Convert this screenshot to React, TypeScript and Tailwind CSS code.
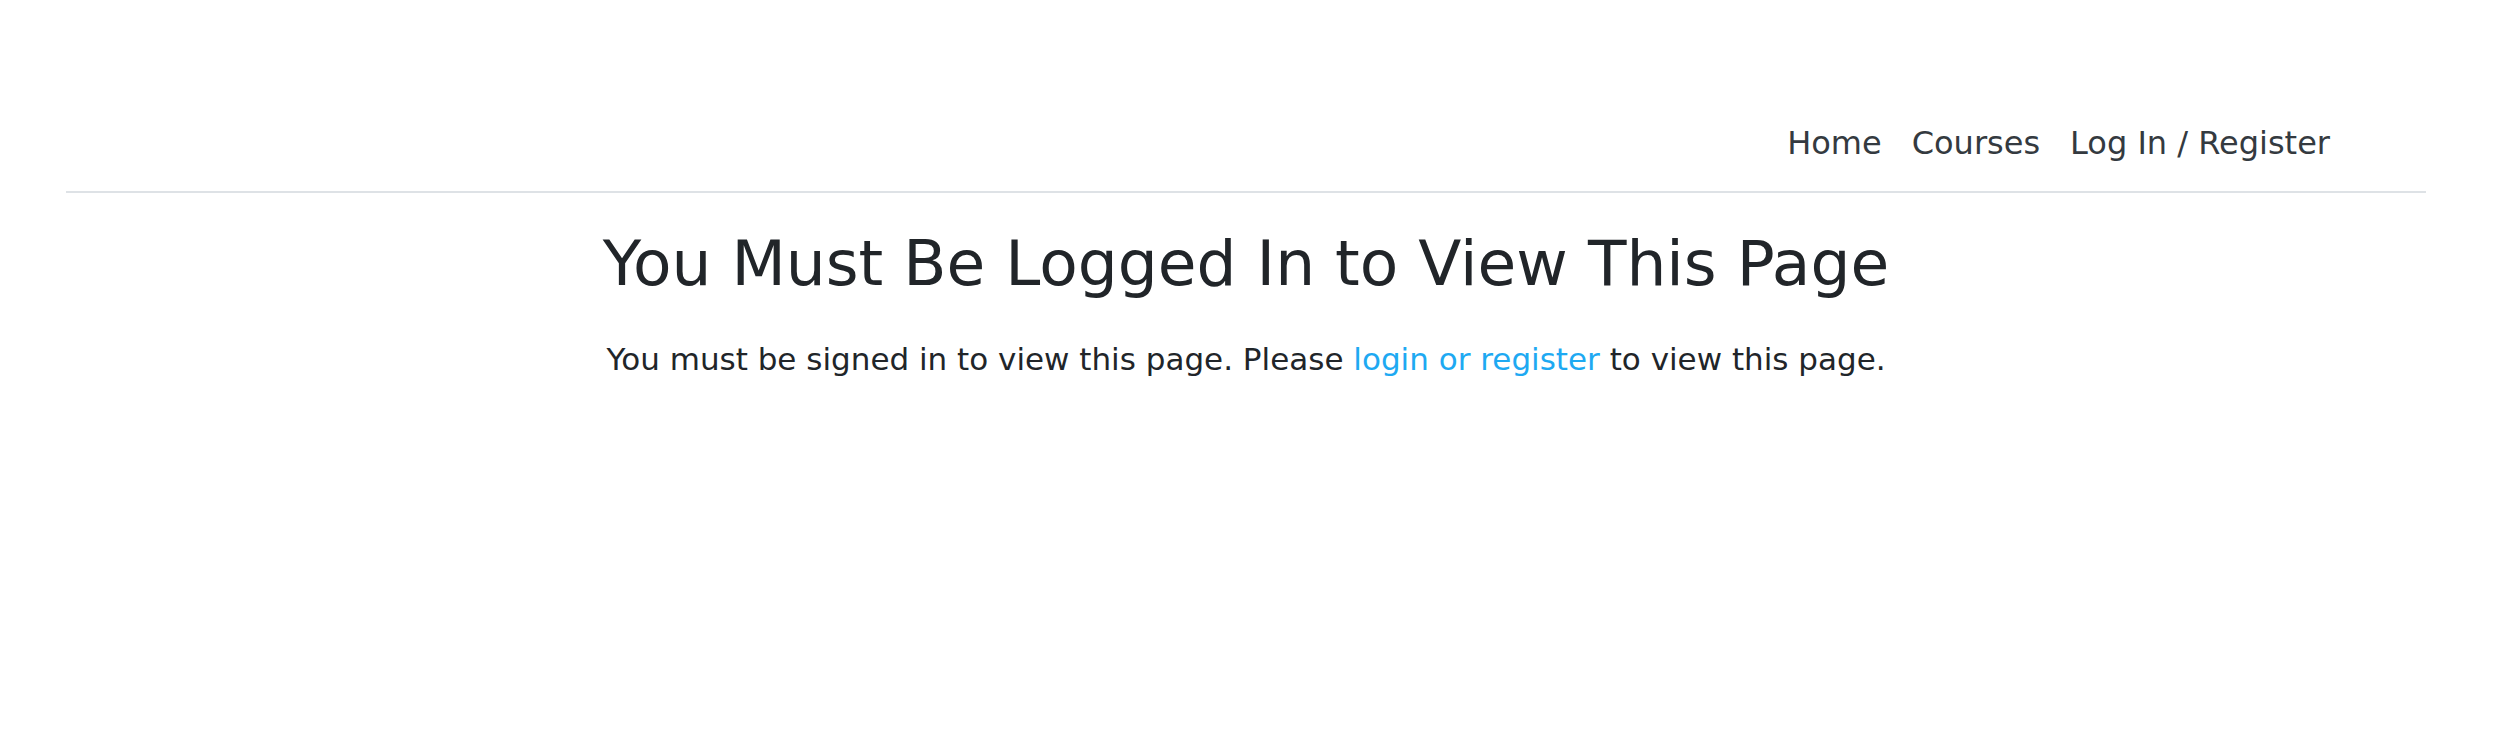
const App = () => {
  return (
    <div className="min-h-screen bg-white font-['DejaVu_Sans',sans-serif]">
      {/* Top nav */}
      <div className="ml-[66px] mr-[80px] border-b-2 border-[#dee2e6]">
        <nav className="flex justify-end items-center gap-[30px] pr-[96px] pt-[121px] pb-[26px] text-[32px] leading-[44px] text-[#343a40]">
          <a href="#" className="hover:text-black">Home</a>
          <a href="#" className="hover:text-black">Courses</a>
          <a href="#" className="hover:text-black">Log In / Register</a>
        </nav>
      </div>

      {/* Content */}
      <div className="text-center pt-[33px] pr-[14px]">
        <h1 className="text-[63px] leading-[76px] text-[#212529]">
          You Must Be Logged In to View This Page
        </h1>
        <p className="mt-[35px] text-[31px] leading-[44px] text-[#212529]">
          You must be signed in to view this page. Please{' '}
          <a href="#" className="text-[#1ea9f2] hover:underline">login or register</a> to view this page.
        </p>
      </div>
    </div>
  );
};

export default App;
